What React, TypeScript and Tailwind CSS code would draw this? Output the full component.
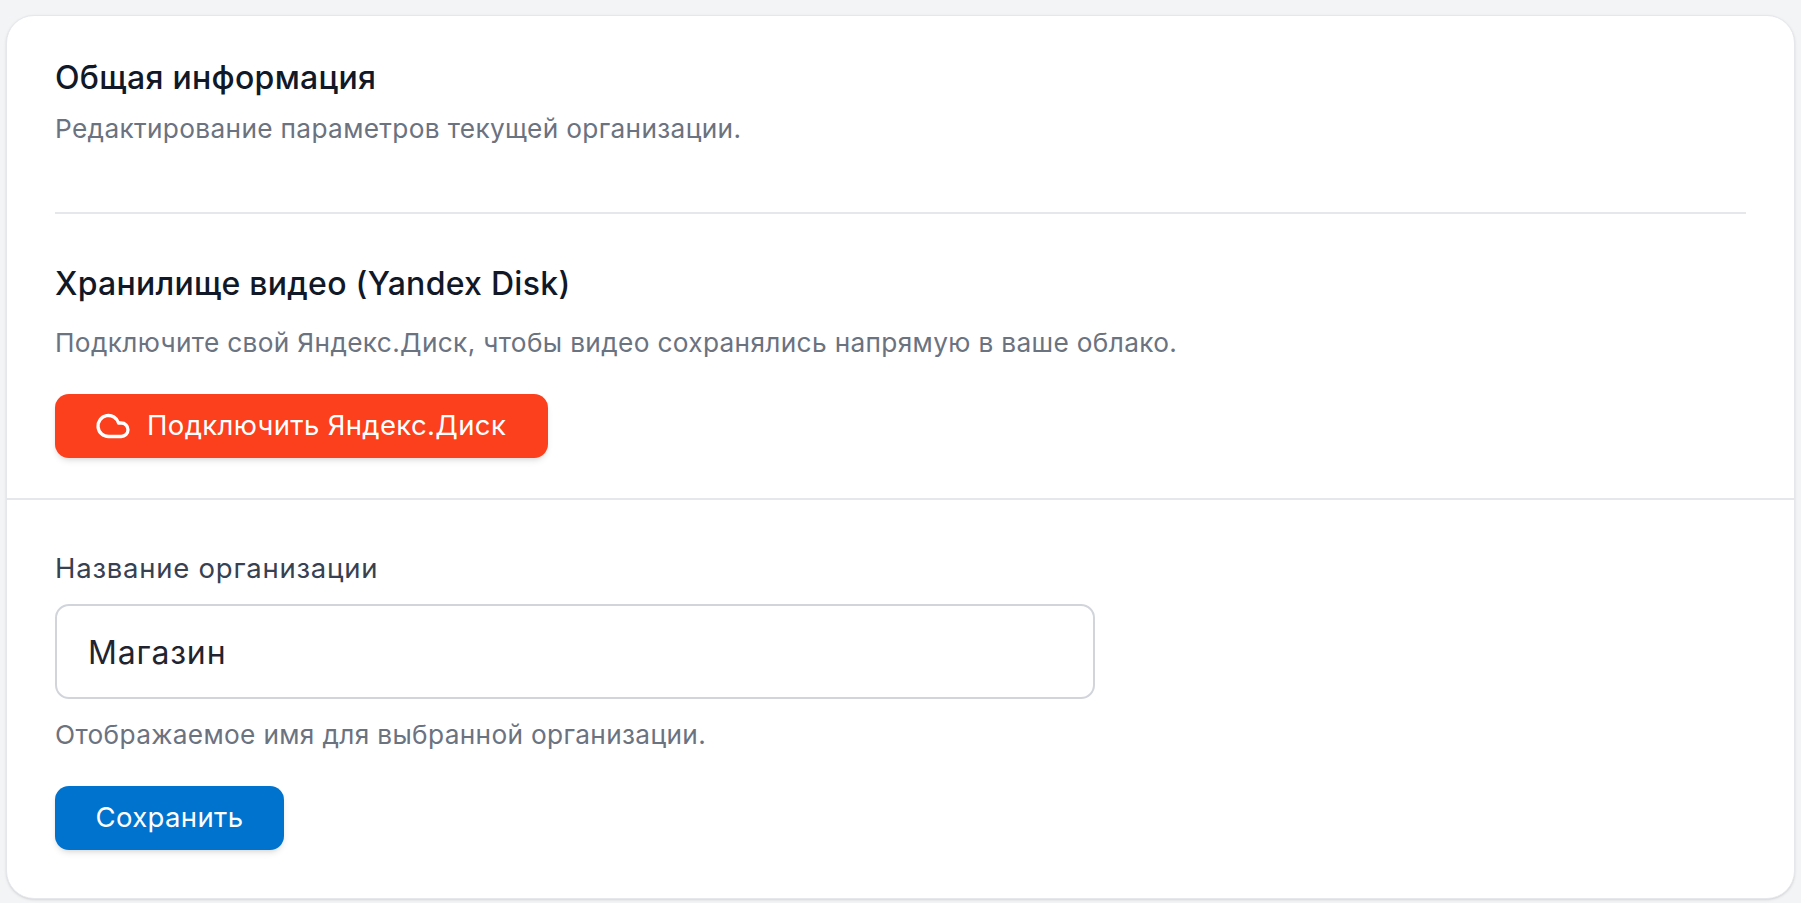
import { Cloud } from "lucide-react";

export default function App() {
  return (
    <div className="min-h-[903px] bg-[#f3f4f6] px-[6px] pt-[15px] pb-[4px] font-['Inter',sans-serif]">
      <div className="bg-white rounded-[28px] border border-[#e5e7eb] shadow-sm h-[884px] flex flex-col">
        <div className="px-12 pt-[40px]">
          <h2 className="text-[32px] tracking-[0.28px] leading-[44px] font-medium text-[#111827]">Общая информация</h2>
          <p className="mt-[9px] text-[26.25px] tracking-[0.33px] leading-[40px] text-[#6b7280]">Редактирование параметров текущей организации.</p>
          <div className="mt-[63px] border-t-2 border-[#e5e7eb]"></div>
          <h2 className="mt-[48px] text-[32px] tracking-[0.28px] leading-[44px] font-medium text-[#111827]">Хранилище видео (Yandex Disk)</h2>
          <p className="mt-[17px] text-[26.25px] tracking-[0.33px] leading-[40px] text-[#6b7280]">Подключите свой Яндекс.Диск, чтобы видео сохранялись напрямую в ваше облако.</p>
          <button className="mt-[31px] h-16 w-[493px] pl-10 rounded-[14px] bg-[#fc3f1d] text-white text-[27.5px] tracking-[0.35px] shadow-md flex items-center gap-4">
            <Cloud size={36} strokeWidth={2.2} />
            Подключить Яндекс.Диск
          </button>
        </div>
        <div className="mt-10 border-t-2 border-[#e5e7eb]"></div>
        <div className="px-12 pt-[48px]">
          <label className="block text-[27.5px] tracking-[0.76px] leading-[40px] text-[#374151]">Название организации</label>
          <input readOnly value="Магазин" className="mt-[16px] block w-[1040px] h-[95px] px-[31px] pt-[2px] rounded-[14px] border-2 border-[#d1d5db] text-[32px] tracking-[0.85px] text-[#1f2430] bg-white outline-none" />
          <p className="mt-[16px] text-[26.25px] tracking-[0.33px] leading-[40px] text-[#6b7280]">Отображаемое имя для выбранной организации.</p>
          <button className="mt-[31px] h-16 w-[229px] rounded-[14px] bg-[#0073cf] text-white text-[27.5px] tracking-[0.35px] shadow-md flex items-center justify-center">Сохранить</button>
        </div>
      </div>
    </div>
  );
}
